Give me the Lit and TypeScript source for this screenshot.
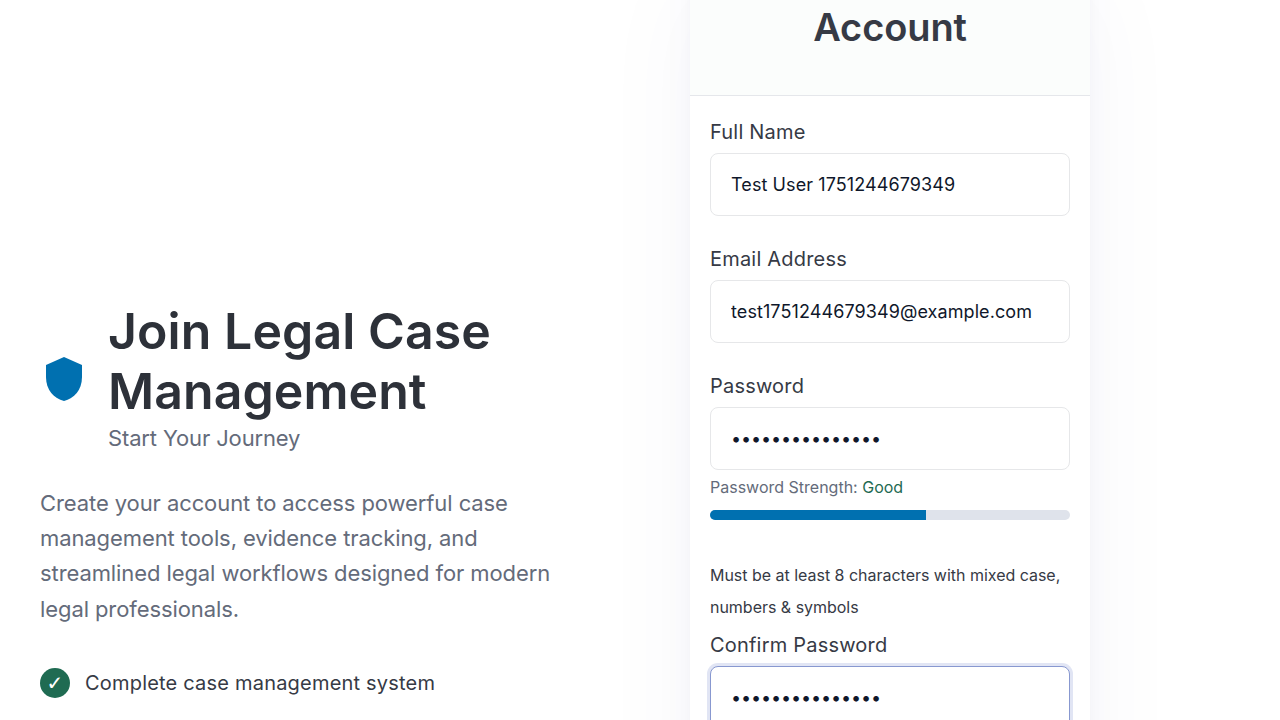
import { LitElement, html, css } from "lit";
import { customElement, property } from "lit/decorators.js";

@customElement("form-field")
class FormField extends LitElement {
  @property() label = "";
  @property() type = "text";
  @property() value = "";
  @property({ type: Boolean, reflect: true }) active = false;

  static styles = css`
    :host { display: block; }
    .label {
      display: block;
      height: 32px;
      margin-bottom: 5px;
      font-size: 20px;
      line-height: 32px;
      letter-spacing: 0.2px;
      color: #363a45;
    }
    .input {
      display: block;
      box-sizing: border-box;
      width: 100%;
      height: 63px;
      padding: 0 20px;
      border: 1px solid #e6e7e9;
      border-radius: 8px;
      background: #fff;
      color: #0f172a;
      font-family: Inter, sans-serif;
      font-size: 18px;
      letter-spacing: 0.09px;
      outline: none;
    }
    .input[type="password"] { letter-spacing: -0.13px; }
    :host([active]) .input {
      border-color: #8898d0;
      box-shadow: 0 0 0 3px #e1e5f4;
    }
  `;

  render() {
    return html`
      <label class="label" for="control">${this.label}</label>
      <input class="input" id="control" type=${this.type} .value=${this.value} />
    `;
  }
}

@customElement("app-root")
class AppRoot extends LitElement {
  static styles = css`
    :host {
      display: block;
      height: 720px;
      overflow: hidden;
      background: #fff;
      font-family: Inter, sans-serif;
    }
    .page {
      display: grid;
      grid-template-columns: 520px 400px;
      column-gap: 130px;
      padding-left: 40px;
      height: 720px;
    }
    .intro { padding-top: 301px; }
    .brand {
      display: flex;
      align-items: center;
      gap: 20px;
      height: 156px;
    }
    .shield { display: block; width: 48px; height: 48px; flex: none; }
    .title {
      margin: -2px 0 0;
      font-size: 50px;
      line-height: 60px;
      font-weight: 600;
      letter-spacing: 0.08px;
      color: #2d3139;
    }
    .tagline {
      margin: 0;
      font-size: 22px;
      line-height: 35px;
      letter-spacing: -0.14px;
      color: #646b7a;
    }
    .lead {
      margin: 29px 0 0;
      font-size: 22px;
      line-height: 35.2px;
      letter-spacing: -0.09px;
      color: #646b7a;
    }
    .feature {
      display: flex;
      align-items: center;
      gap: 15px;
      margin-top: 40px;
      font-size: 20px;
      line-height: 32px;
      letter-spacing: 0.2px;
      color: #363a45;
    }
    .tick {
      display: grid;
      place-items: center;
      width: 30px;
      height: 30px;
      border-radius: 50%;
      background: #1f6b52;
      color: #fff;
      font-family: "DejaVu Sans", sans-serif;
      font-size: 20px;
      letter-spacing: 0;
      line-height: 30px;
    }
    .card {
      height: 900px;
      margin-top: -64px;
      background: #fff;
      box-shadow:
        0 50px 100px rgba(50, 50, 120, 0.04),
        0 10px 40px rgba(50, 60, 150, 0.025),
        0 2px 8px rgba(50, 50, 93, 0.03);
    }
    .head {
      box-sizing: border-box;
      height: 160px;
      padding: 19px 80px 0;
      border-bottom: 1px solid #e5e7eb;
      background: #fbfdfc;
    }
    .heading {
      margin: 0;
      text-align: center;
      font-size: 38px;
      line-height: 48px;
      font-weight: 600;
      letter-spacing: -0.1px;
      color: #363a45;
    }
    .form { padding: 20px 20px 0; }
    .field { margin-bottom: 27px; }
    .field.tight { margin-bottom: 0; }
    .strength {
      margin: 4px 0 9px;
      font-size: 16px;
      line-height: 27px;
      color: #646b7a;
    }
    .rating { color: #1f6b52; }
    .meter {
      height: 10px;
      overflow: hidden;
      border-radius: 5px;
      background: #dfe3eb;
    }
    .level { height: 100%; background: #0070b0; }
    .hint {
      margin: 39px 0 6px;
      font-size: 16px;
      line-height: 32px;
      letter-spacing: -0.02px;
      color: #363a45;
    }
  `;

  private strength = 60;

  render() {
    return html`
      <main class="page">
        <section class="intro">
          <div class="brand">
            <svg class="shield" viewBox="0 0 48 48" aria-hidden="true">
              <path fill="#0070b0" d="M24 2 42 10V22C42 35 34 43.5 24 46 14 43.5 6 35 6 22V10Z" />
            </svg>
            <div>
              <h1 class="title">Join Legal Case Management</h1>
              <p class="tagline">Start Your Journey</p>
            </div>
          </div>
          <p class="lead">
            Create your account to access powerful case management tools,
            evidence tracking, and streamlined legal workflows designed for
            modern legal professionals.
          </p>
          <div class="feature"><span class="tick">✓</span>Complete case management system</div>
        </section>
        <section class="card">
          <header class="head"><h2 class="heading">Create Account</h2></header>
          <div class="form">
            <form-field class="field" label="Full Name" value="Test User 1751244679349"></form-field>
            <form-field class="field" label="Email Address" value="test1751244679349@example.com"></form-field>
            <form-field class="field tight" label="Password" type="password" value="TestPassword123"></form-field>
            <p class="strength">Password Strength: <span class="rating">Good</span></p>
            <div class="meter"><div class="level" style="width:${this.strength}%"></div></div>
            <p class="hint">Must be at least 8 characters with mixed case, numbers &amp; symbols</p>
            <form-field class="field" active label="Confirm Password" type="password" value="TestPassword123"></form-field>
          </div>
        </section>
      </main>
    `;
  }
}
